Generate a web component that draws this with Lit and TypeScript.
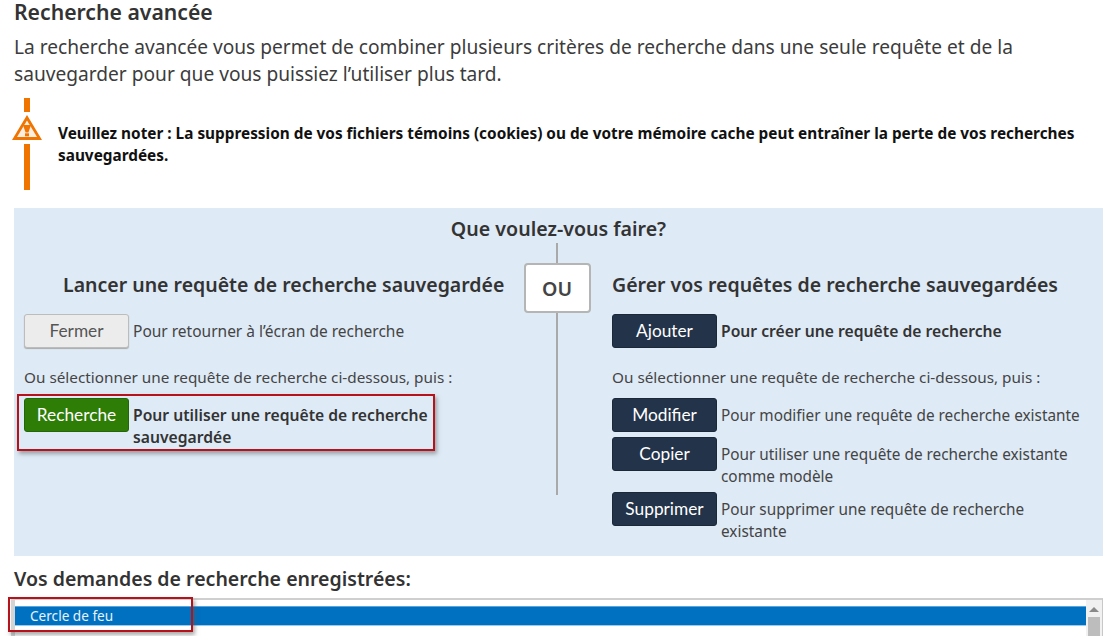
import { LitElement, html, css } from "lit";
import { customElement } from "lit/decorators.js";

@customElement("app-root")
export class AppRoot extends LitElement {
  static styles = css`
    :host { display: block; width: 1107px; height: 636px; overflow: hidden; position: relative; background: #fff;
      font-family: "Noto Sans", "Open Sans", sans-serif; color: #333; }
    .page { padding: 0 4px 0 14px; box-sizing: border-box; height: 636px; display: flex; flex-direction: column; }
    h1 { margin: 0; font-size: 21.2px; line-height: 24px; font-weight: 600; color: #333; height: 33.5px; }
    .intro { margin: 0; font-size: 19.15px; line-height: 27.5px; color: #3c3c3c; width: 1060px; height: 64.5px; }
    .note { display: flex; align-items: center; height: 92px; }
    .rail { width: 30px; margin-left: -2px; height: 92px; display: flex; flex-direction: column; align-items: center; flex: none; }
    .rail i { display: block; width: 6px; background: #f07400; }
    .rail i.a { height: 14px; }
    .rail i.b { height: 46px; margin-top: 4px; }
    .rail svg { display: block; margin-top: 3px; }
    .note p { margin: 0 0 0 16px; font-size: 15.35px; line-height: 22px; font-weight: 700; color: #111; width: 1030px; }
    .panel { background: #deeaf6; margin-top: 18px; height: 348px; position: relative; box-sizing: border-box; padding: 8px 10px 0; }
    .panel h2 { margin: 0; font-size: 19.6px; line-height: 26px; font-weight: 600; text-align: center; color: #333; }
    .cols { display: grid; grid-template-columns: 500px 66px 1fr; margin-top: 1px; }
    .mid { display: flex; flex-direction: column; align-items: center; height: 252px; }
    .mid .ln { width: 2px; background: #a9a9a9; }
    .mid .ln.t { height: 20px; }
    .mid .ln.b { flex: 1; }
    .ou { box-sizing: border-box; width: 67px; height: 50px; flex: none; background: #fff; border: 2px solid #b5b5b5; border-radius: 4px;
      display: flex; align-items: center; justify-content: center; font-size: 19.6px; font-weight: 600; color: #444; }
    .left { padding-top: 29px; }
    .right { padding: 29px 0 0 22px; }
    h3 { margin: 0; font-size: 19.5px; line-height: 26px; font-weight: 600; color: #333; white-space: nowrap; }
    .left h3 { padding-left: 39px; }
    .row { display: flex; align-items: flex-start; gap: 4px; }
    .btn { flex: none; box-sizing: border-box; width: 105px; height: 34px; border-radius: 3px; font-family: Lato, sans-serif; font-size: 17.3px;
      display: flex; align-items: center; justify-content: center; padding-bottom: 2px; }
    .btn.grey { background: #ececec; border: 1px solid #bcbcbc; color: #555; box-shadow: 0 1px 1px #aaa; }
    .btn.green { background: #2e7d06; color: #fff; border: 1px solid #26660a; }
    .btn.navy { background: #233349; color: #fff; border: 1px solid #1b2838; }
    .row span { font-size: 15.33px; line-height: 21.5px; color: #444; padding-top: 7px; }
    .row span.bold { font-size: 15.7px; font-weight: 600; color: #333; }
    .row span.wide { font-size: 15.5px; }
    .or { margin: 18px 0 0; font-size: 15.3px; line-height: 22px; color: #444; white-space: nowrap; }
    .r1 { margin-top: 16px; }
    .r2 { margin-top: 10px; width: 410px; }
    .r3 { margin-top: 10px; }
    .r4, .r5 { margin-top: 5px; }
    .r4 span { width: 370px; }
    .r5 span { width: 360px; }
    .list-title { margin: 0; font-size: 19.55px; line-height: 26px; font-weight: 600; color: #333; padding-top: 10px; height: 42px; box-sizing: border-box; }
    .list { height: 38px; margin-left: -3px; border-right: 1px solid #c8c8c8; border-top: 2px solid #cfcfcf; border-left: 4px solid #d4d4d4; box-sizing: border-box; display: flex; }
    .items { flex: 1; padding-top: 6px; font-size: 13.6px; min-width: 0; }
    .sel { background: #0070c0; color: #e8f2fb; box-sizing: border-box; height: 20px; line-height: 18px; padding-left: 15px; border-top: 1px solid #5aa5de; border-bottom: 1px solid #9cc8ec; }
    .sb { width: 16px; flex: none; background: #f1f1f1; display: flex; flex-direction: column; align-items: center; }
    .sb svg { display: block; margin-top: 7px; }
    .sb i { display: block; width: 12px; flex: 1; margin-top: 5px; background: #bdbdbd; }
    .mark { position: absolute; box-sizing: border-box; border: 2px solid #b5121b; box-shadow: 2px 3px 4px rgba(90,90,90,.5); pointer-events: none; }
    .m1 { left: 17px; top: 394px; width: 418px; height: 57px; }
    .m2 { left: 8px; top: 597px; width: 185px; height: 35px; }
  `;

  render() {
    return html`
      <div class="page">
        <h1>Recherche avancée</h1>
        <p class="intro">La recherche avancée vous permet de combiner plusieurs critères de recherche dans une seule requête et de la sauvegarder pour que vous puissiez l’utiliser plus tard.</p>
        <div class="note">
          <div class="rail">
            <i class="a"></i>
            <svg width="30" height="25" viewBox="0 0 30 25">
              <path d="M15 0 L30 25 H0 Z" fill="#f07400"/>
              <path d="M15 5.5 L25 22 H5 Z" fill="#fdeee2"/>
              <path d="M11 10 H19 L16.4 17.5 H13.6 Z" fill="#f07400"/>
              <rect x="13" y="18.3" width="4" height="3" fill="#f07400"/>
            </svg>
            <i class="b"></i>
          </div>
          <p>Veuillez noter : La suppression de vos fichiers témoins (cookies) ou de votre mémoire cache peut entraîner la perte de vos recherches sauvegardées.</p>
        </div>
        <div class="panel">
          <h2>Que voulez-vous faire?</h2>
          <div class="cols">
            <div class="left">
              <h3>Lancer une requête de recherche sauvegardée</h3>
              <div class="row r1"><div class="btn grey">Fermer</div><span class="wide">Pour retourner à l’écran de recherche</span></div>
              <p class="or">Ou sélectionner une requête de recherche ci-dessous, puis :</p>
              <div class="row r2"><div class="btn green">Recherche</div><span class="bold">Pour utiliser une requête de recherche sauvegardée</span></div>
            </div>
            <div class="mid">
              <div class="ln t"></div>
              <div class="ou">OU</div>
              <div class="ln b"></div>
            </div>
            <div class="right">
              <h3>Gérer vos requêtes de recherche sauvegardées</h3>
              <div class="row r1"><div class="btn navy">Ajouter</div><span class="bold">Pour créer une requête de recherche</span></div>
              <p class="or">Ou sélectionner une requête de recherche ci-dessous, puis :</p>
              <div class="row r3"><div class="btn navy">Modifier</div><span>Pour modifier une requête de recherche existante</span></div>
              <div class="row r4"><div class="btn navy">Copier</div><span>Pour utiliser une requête de recherche existante comme modèle</span></div>
              <div class="row r5"><div class="btn navy">Supprimer</div><span>Pour supprimer une requête de recherche existante</span></div>
            </div>
          </div>
        </div>
        <h2 class="list-title">Vos demandes de recherche enregistrées:</h2>
        <div class="list">
          <div class="items"><div class="sel">Cercle de feu</div></div>
          <div class="sb">
            <svg width="10" height="5" viewBox="0 0 10 5"><path d="M5 0 L10 5 H0 Z" fill="#8a8a8a"/></svg>
            <i></i>
          </div>
        </div>
      </div>
      <div class="mark m1"></div>
      <div class="mark m2"></div>
    `;
  }
}
